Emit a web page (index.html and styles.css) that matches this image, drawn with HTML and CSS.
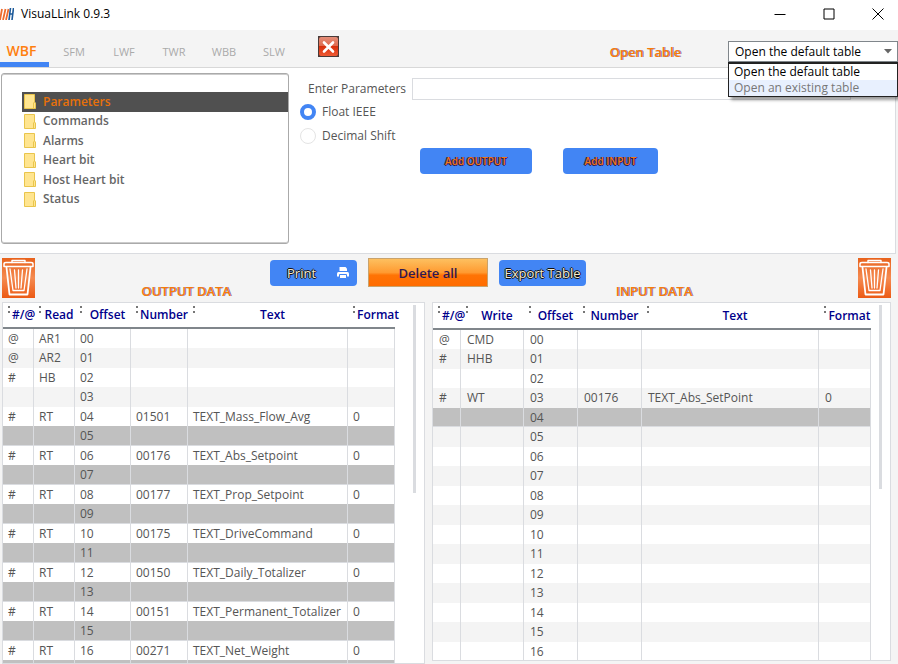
FILE: index.html
```
<!DOCTYPE html>
<html lang="en">
<head>
    <meta charset="UTF-8">
    <meta name="viewport" content="width=device-width, initial-scale=1.0">
    <title>VisuaLLink 0.9.3</title>
    <link rel="stylesheet" href="styles.css">
</head>
<body>
    <!-- Shared icons -->
    <svg class="sprite" aria-hidden="true">
        <defs>
            <linearGradient id="trashFill" x1="0" y1="0" x2="0" y2="1">
                <stop offset="0" stop-color="#e8621c"/>
                <stop offset="0.5" stop-color="#f58a50"/>
                <stop offset="1" stop-color="#ec5a14"/>
            </linearGradient>
            <linearGradient id="closeFill" x1="0" y1="0" x2="0" y2="1">
                <stop offset="0" stop-color="#e38d78"/>
                <stop offset="0.48" stop-color="#e0694c"/>
                <stop offset="0.5" stop-color="#d8300c"/>
                <stop offset="1" stop-color="#ee5a34"/>
            </linearGradient>
        </defs>
        <symbol id="trash" viewBox="0 0 33 40">
            <rect width="33" height="40" fill="url(#trashFill)"/>
            <g fill="none" stroke="#fff" stroke-linecap="round" stroke-linejoin="round">
                <path d="M10 4.500V2.500H23V4.500" stroke-width="1.400"/>
                <path d="M2 8.500V6Q2 4.500 4 4.500H29Q31 4.500 31 6V8.500Z" stroke-width="1.500"/>
                <path d="M4.500 9.500L7.500 36.500H25.500L28.500 9.500" stroke-width="1.800"/>
                <path d="M8 11L11 32.500H22L25 11M12.500 12L14 30M16.500 12V30M20.500 12L19 30" stroke-width="1.300"/>
            </g>
        </symbol>
        <symbol id="folder" viewBox="0 0 12 15">
            <path d="M0.500 0.500H10.500V8L11.500 9V14.500H0.500Z" fill="#ffe590" stroke="#e9c54c"/>
            <path d="M9.500 14V9L10.500 8" fill="none" stroke="#e9c54c"/>
        </symbol>
    </svg>

    <header class="titlebar">
        <svg class="logo" viewBox="0 0 14 12" width="14" height="12" aria-hidden="true">
            <path d="M0 12L2 1M3 12L5.500 1M6 12L8.500 1" stroke="#ee6b2d" stroke-width="1.800"/>
            <path d="M9 12L10.500 0M12 12L13.500 0M9.500 6H13" stroke="#1d5a9a" stroke-width="1.600" fill="none"/>
        </svg>
        <h1>VisuaLLink 0.9.3</h1>
        <div class="window-buttons">
            <button type="button" aria-label="Minimize"><svg viewBox="0 0 12 12" width="12" height="12"><path d="M0.500 6.500H11.500"/></svg></button>
            <button type="button" aria-label="Maximize"><svg viewBox="0 0 12 12" width="12" height="12"><path d="M1 1H11V11H1Z"/></svg></button>
            <button type="button" aria-label="Close"><svg viewBox="0 0 12 12" width="12" height="12"><path d="M0.500 0.500L11.500 11.500M11.500 0.500L0.500 11.500"/></svg></button>
        </div>
    </header>

    <nav class="tabbar">
        <a href="#wbf" class="tab active">WBF</a>
        <a href="#sfm" class="tab">SFM</a>
        <a href="#lwf" class="tab">LWF</a>
        <a href="#twr" class="tab">TWR</a>
        <a href="#wbb" class="tab">WBB</a>
        <a href="#slw" class="tab">SLW</a>
        <button type="button" class="exit" aria-label="Exit">
            <svg viewBox="0 0 21 21" width="21" height="21">
                <rect width="21" height="21" fill="#4a3a38"/>
                <rect x="1" y="1" width="19" height="19" rx="2" fill="url(#closeFill)"/>
                <path d="M6 6.500L15 15.500M15 6.500L6 15.500" stroke="#fff" stroke-width="2.600" stroke-linecap="round"/>
            </svg>
        </button>
        <label class="glow open-label" for="openTable">Open Table</label>
        <div class="dropdown">
            <select id="openTable">
                <option>Open the default table</option>
                <option>Open an existing table</option>
            </select>
            <svg class="arrow" viewBox="0 0 8 5" width="8" height="5" aria-hidden="true"><path d="M0 0H8L4 4.500Z" fill="#666"/></svg>
            <ul class="dropdown-list">
                <li>Open the default table</li>
                <li class="hovered">Open an existing table</li>
            </ul>
        </div>
    </nav>

    <section class="top-panel">
        <ul class="tree">
            <li class="selected"><svg><use href="#folder"/></svg>Parameters</li>
            <li><svg><use href="#folder"/></svg>Commands</li>
            <li><svg><use href="#folder"/></svg>Alarms</li>
            <li><svg><use href="#folder"/></svg>Heart bit</li>
            <li><svg><use href="#folder"/></svg>Host Heart bit</li>
            <li><svg><use href="#folder"/></svg>Status</li>
        </ul>
        <form class="params">
            <div class="field">
                <label for="param">Enter Parameters</label>
                <input type="text" id="param">
            </div>
            <label class="radio"><input type="radio" name="format" checked>Float IEEE</label>
            <label class="radio"><input type="radio" name="format">Decimal Shift</label>
            <div class="add-buttons">
                <button type="button" class="btn add-output">Add OUTPUT</button>
                <button type="button" class="btn add-input">Add INPUT</button>
            </div>
        </form>
    </section>

    <section class="toolbar">
        <button type="button" class="trash" aria-label="Delete output row"><svg><use href="#trash"/></svg></button>
        <h2 class="glow output-title">OUTPUT DATA</h2>
        <div class="actions">
            <button type="button" class="btn print">Print
                <svg viewBox="0 0 12 12" width="12" height="12" aria-hidden="true">
                    <path d="M2.500 0H8.500L10 1.500V4H2.500Z" fill="#fff"/>
                    <path d="M1.500 5H10.500Q12 5 12 6.500V9.500H0V6.500Q0 5 1.500 5Z" fill="#fff"/>
                    <path d="M2.500 7.500H9.500V11.500H2.500Z" fill="#fff" stroke="#4285f4"/>
                </svg>
            </button>
            <button type="button" class="delete-all">Delete all</button>
            <button type="button" class="btn export">Export Table</button>
        </div>
        <h2 class="glow input-title">INPUT DATA</h2>
        <button type="button" class="trash last" aria-label="Delete input row"><svg><use href="#trash"/></svg></button>
    </section>

    <main class="tables">
        <div class="panel">
            <table class="output-table">
                <colgroup><col class="w-31"><col class="w-41"><col class="w-56"><col class="w-57"><col><col class="w-47"></colgroup>
                <thead>
                    <tr><th>#/@</th><th>Read</th><th>Offset</th><th>Number</th><th>Text</th><th>Format</th></tr>
                </thead>
                <tbody id="outputRows"></tbody>
            </table>
            <div class="scrollbar"></div>
        </div>
        <div class="panel input-panel">
            <table class="input-table">
                <colgroup><col class="w-28"><col class="w-63"><col class="w-54"><col class="w-64"><col><col class="w-52"></colgroup>
                <thead>
                    <tr><th>#/@</th><th>Write</th><th>Offset</th><th>Number</th><th>Text</th><th>Format</th></tr>
                </thead>
                <tbody id="inputRows"></tbody>
            </table>
            <div class="scrollbar"></div>
        </div>
    </main>

    <script src="script.js"></script>
</body>
</html>
```
FILE: styles.css
```
* {
    box-sizing: border-box;
    margin: 0;
    padding: 0;
}

body {
    height: 100vh;
    display: flex;
    flex-direction: column;
    overflow: hidden;
    background: #f4f4f4;
    color: #555;
    font-family: 'Open Sans', sans-serif;
    font-size: 12px;
    line-height: 18px;
}

button, input, select {
    font: inherit;
    color: inherit;
    border: none;
    background: none;
}

ul {
    list-style: none;
}

.sprite {
    position: absolute;
    width: 0;
    height: 0;
}

/* Title bar */
.titlebar {
    flex: none;
    height: 30px;
    display: flex;
    align-items: center;
    padding-bottom: 3px;
    background: #fff;
    color: #000;
}

.titlebar h1 {
    margin-left: 7px;
    font-size: 12px;
    font-weight: 400;
}

.window-buttons {
    margin-left: auto;
    display: flex;
}

.window-buttons button {
    width: 49px;
    height: 26px;
    display: flex;
    align-items: center;
    justify-content: center;
}

.window-buttons button:last-child {
    width: 40px;
    margin-left: 5px;
}

.window-buttons path {
    fill: none;
    stroke: #000;
}

/* Tabs */
.tabbar {
    flex: none;
    height: 38px;
    display: flex;
    align-items: center;
    border-bottom: 1px solid #d8d8d8;
}

.tab {
    width: 50px;
    height: 37px;
    padding-top: 5px;
    color: #aaa;
    font-size: 11px;
    line-height: 34px;
    text-align: center;
    text-decoration: none;
}

.tab.active {
    width: 49px;
    padding: 4px 6px 0 0;
    border-bottom: 5px solid #4285f4;
    color: #ff7f0e;
    font-size: 14px;
    font-weight: 600;
}

.exit {
    width: 21px;
    height: 21px;
    margin: 0 0 5px 19px;
}

.exit svg {
    display: block;
}

.glow {
    color: #f57c0a;
    font-size: 13px;
    font-weight: 600;
    white-space: nowrap;
    text-shadow: 1px 0 0 rgba(60, 30, 130, 0.6);
}

.open-label {
    margin: 7px 47px 0 auto;
}

.dropdown {
    position: relative;
    width: 170px;
    height: 21px;
    margin-top: 6px;
    color: #000;
}

.dropdown select {
    width: 100%;
    height: 21px;
    padding: 0 6px;
    border: 1px solid #80868b;
    background: #fff;
    appearance: none;
}

.arrow {
    position: absolute;
    top: 8px;
    right: 6px;
}

.dropdown-list {
    position: absolute;
    top: 21px;
    left: 0;
    width: 100%;
    z-index: 2;
    border: 1px solid #222;
    border-top-width: 2px;
    background: #fff;
    line-height: 16px;
    box-shadow: 3px 3px 3px rgba(0, 0, 0, 0.4);
}

.dropdown-list li {
    padding-left: 5px;
}

.dropdown-list .hovered {
    background: #e8f0fe;
    color: #777;
}

/* Parameters panel */
.top-panel {
    flex: none;
    display: flex;
    gap: 12px;
    height: 186px;
    margin-right: 2px;
    padding: 5px 0 9px 1px;
    border: 1px solid #dadce0;
    border-width: 0 1px 1px 0;
    background: #fff;
}

.tree {
    width: 288px;
    height: 171px;
    display: grid;
    grid-auto-rows: 1fr;
    padding: 18px 0 34px 20px;
    border: 1px solid #aaa;
    border-radius: 3px;
    font-weight: 600;
    box-shadow: inset 0 1px #ccc, inset 0 -1px #ccc;
    color: #666;
}

.tree li {
    display: flex;
    align-items: center;
    padding-left: 2px;
}

.tree svg {
    width: 12px;
    height: 15px;
    margin-right: 7px;
}

.tree .selected {
    background: #505050;
    color: #e8710a;
}

.params {
    flex: 1;
    padding-left: 7px;
}

.field {
    display: flex;
    align-items: center;
    margin: 5px 44px 0 0;
    font-weight: 500;
}

.field input {
    flex: 1;
    height: 22px;
    margin-left: 6px;
    padding: 0 6px;
    border: 1px solid #dadce0;
}

.radio {
    display: flex;
    align-items: center;
    height: 24px;
    margin-left: -8px;
}

.radio input {
    appearance: none;
    width: 16px;
    height: 16px;
    margin-right: 6px;
    border: 1px solid #e4e4e4;
    border-radius: 50%;
    background: #fff;
}

.radio input:checked {
    border: 4px solid #4285f4;
}

.add-buttons {
    display: flex;
    gap: 31px;
    margin-left: 112px;
}

.btn {
    height: 26px;
    border-radius: 4px;
    background: #4285f4;
}

.add-output, .add-input {
    color: #f07818;
    font-size: 10px;
    font-weight: 600;
    text-shadow: 1px 0 #301858, -1px 0 #301858, 0 1px #301858;
}

.add-output {
    width: 112px;
}

.add-input {
    width: 95px;
}

/* Toolbar above the tables */
.toolbar {
    flex: none;
    display: flex;
    align-items: flex-start;
    height: 48px;
    padding: 4px 7px 0 2px;
}

.trash svg {
    display: block;
    width: 33px;
    height: 40px;
}

.trash.last {
    margin-left: auto;
}

.toolbar h2 {
    height: 44px;
    padding-top: 24px;
    text-align: center;
}

.output-title {
    width: 92px;
    margin: 0 38px 0 105px;
}

.input-title {
    width: 78px;
    margin-left: 29px;
}

.actions {
    display: flex;
    align-items: center;
    gap: 11px;
    height: 29px;
}

.print, .export {
    width: 87px;
    color: #f4ead0;
    font-size: 13px;
    white-space: nowrap;
    text-shadow: 1px 0 #111, -1px 0 #111, 0 1px #111, 0 -1px #111;
}

.print {
    display: flex;
    align-items: center;
    justify-content: space-between;
    padding: 0 8px 0 17px;
}

.delete-all {
    width: 120px;
    height: 29px;
    border: 1px solid #c9a36c;
    background: linear-gradient(#fdc060, #ff9a30 50%, #ff7304 60%, #ff6c00);
    color: #301850;
    font-size: 13px;
    font-weight: 600;
}

/* Data tables */
.tables {
    flex: 1;
    min-height: 0;
    display: grid;
    grid-template-columns: 423fr 459fr;
    gap: 7px;
    padding: 0 7px 0 2px;
}

.panel {
    display: flex;
    min-height: 0;
    overflow: hidden;
    border: 1px solid #dadce0;
    background: #fff;
}

.input-panel {
    margin-bottom: 3px;
}

.panel table {
    flex: 1;
    align-self: flex-start;
    width: 100%;
    table-layout: fixed;
    border-spacing: 0;
}

th {
    position: relative;
    height: 26px;
    padding-left: 9px;
    border-bottom: 2px solid #80868b;
    color: #00008b;
    font-weight: 600;
}

.input-table th {
    height: 27px;
}

/* sort handle dots */
th::before {
    content: "";
    position: absolute;
    top: 3px;
    left: 5px;
    width: 2px;
    height: 2px;
    background: #777;
    box-shadow: 0 5px #777;
}

td {
    height: 19px;
    padding-left: 5px;
    border-right: 1px solid #dadce0;
    white-space: nowrap;
}

.input-table td {
    padding-left: 6px;
}

tr:nth-child(even) td {
    height: 20px;
    background: #f4f4f4;
}

tbody tr.reserved td {
    border-bottom: 1px solid #dadce0;
    background: #c0c0c0;
    line-height: 17px;
}

.scrollbar {
    width: 3px;
    height: 188px;
    background: #dadce0;
}

.panel .scrollbar {
    margin: 2px 8px 0 18px;
}

.input-panel .scrollbar {
    height: 184px;
    margin-left: 8px;
}

.w-28 { width: 28px; }
.w-31 { width: 31px; }
.w-41 { width: 41px; }
.w-47 { width: 47px; }
.w-52 { width: 52px; }
.w-54 { width: 54px; }
.w-56 { width: 56px; }
.w-57 { width: 57px; }
.w-63 { width: 63px; }
.w-64 { width: 64px; }
```
FILE: script.js
```
// offset -> [type, read/write, number, text, format]
const outputData = {
    0: ['@', 'AR1'],
    1: ['@', 'AR2'],
    2: ['#', 'HB'],
    4: ['#', 'RT', '01501', 'TEXT_Mass_Flow_Avg', '0'],
    6: ['#', 'RT', '00176', 'TEXT_Abs_Setpoint', '0'],
    8: ['#', 'RT', '00177', 'TEXT_Prop_Setpoint', '0'],
    10: ['#', 'RT', '00175', 'TEXT_DriveCommand', '0'],
    12: ['#', 'RT', '00150', 'TEXT_Daily_Totalizer', '0'],
    14: ['#', 'RT', '00151', 'TEXT_Permanent_Totalizer', '0'],
    16: ['#', 'RT', '00271', 'TEXT_Net_Weight', '0']
};

const inputData = {
    0: ['@', 'CMD'],
    1: ['#', 'HHB'],
    3: ['#', 'WT', '00176', 'TEXT_Abs_SetPoint', '0']
};

const lastOffset = 16;

function fillTable(id, data) {
    let html = '';
    for (let i = 0; i <= lastOffset; i++) {
        let [type = '', mode = '', number = '', text = '', format = ''] = data[i] || [];
        // a float takes two words, so the offset after it is reserved
        let reserved = data[i - 1] && data[i - 1][2] ? ' class="reserved"' : '';
        let offset = String(i).padStart(2, '0');
        html += `<tr${reserved}><td>${type}</td><td>${mode}</td><td>${offset}</td><td>${number}</td><td>${text}</td><td>${format}</td></tr>`;
    }
    // closing row under a float in the last offset
    if (data[lastOffset]) {
        html += '<tr class="reserved">' + '<td></td>'.repeat(6) + '</tr>';
    }
    document.getElementById(id).innerHTML = html;
}

fillTable('outputRows', outputData);
fillTable('inputRows', inputData);
```
